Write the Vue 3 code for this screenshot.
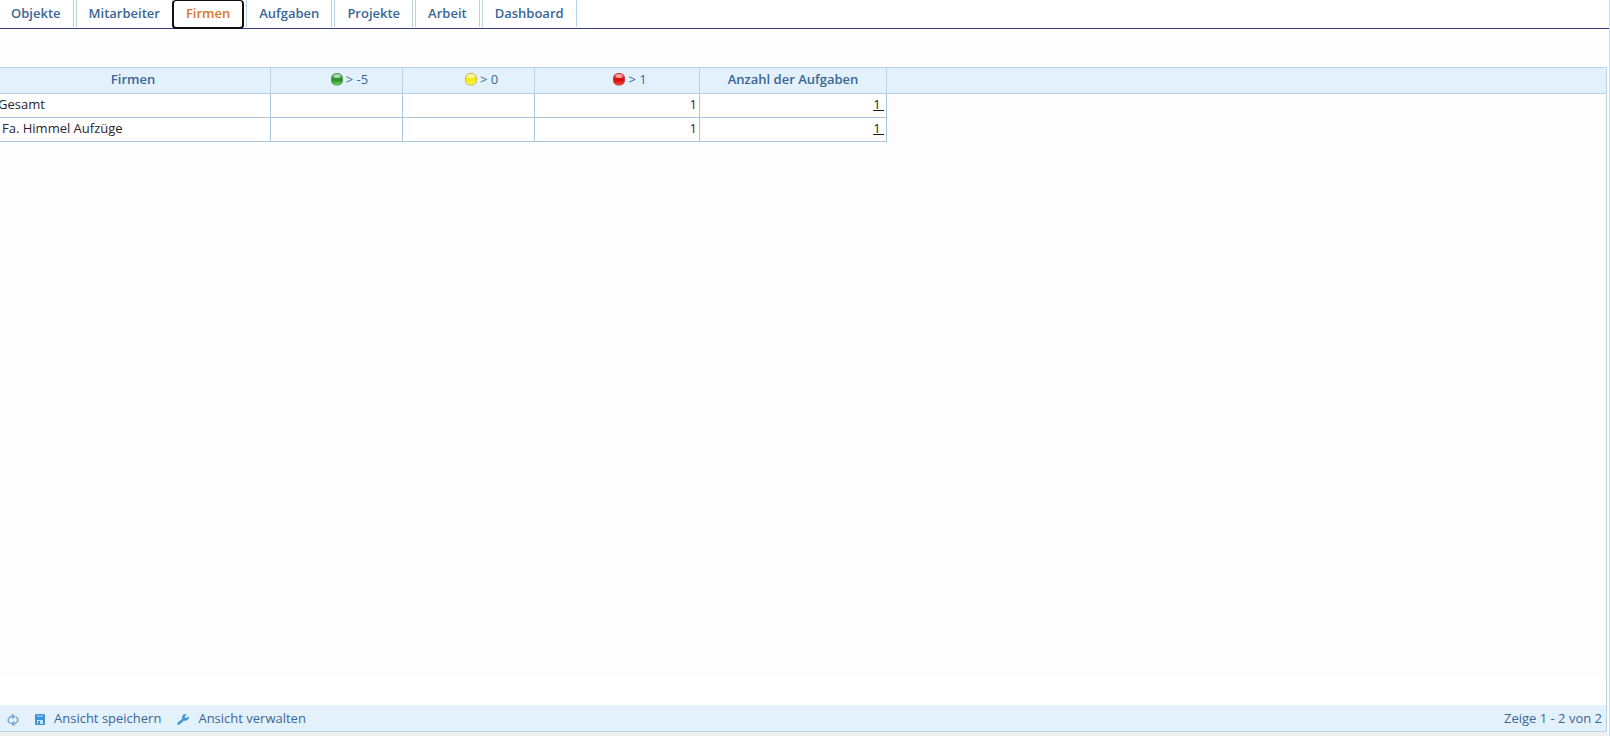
<script setup>
import { ref } from 'vue'

const tabs = ['Objekte', 'Mitarbeiter', 'Firmen', 'Aufgaben', 'Projekte', 'Arbeit', 'Dashboard']
const active = ref('Firmen')
const rows = [
  { name: 'Gesamt', total: true, late: 1, count: 1 },
  { name: 'Fa. Himmel Aufzüge', total: false, late: 1, count: 1 },
]
const lights = [
  { id: 'green', label: '> -5', edge: '#4f9a50', top: '#a5dca0', mid: '#2c9230', low: '#6be052' },
  { id: 'yellow', label: '> 0', edge: '#d0b45a', top: '#fffbb0', mid: '#f8ea10', low: '#fffa5a' },
  { id: 'red', label: '> 1', edge: '#c03c3c', top: '#ffb0ac', mid: '#d80c0c', low: '#ff4a3c' },
]
</script>

<template>
  <div class="page">
    <nav class="tabs">
      <button
        v-for="tab in tabs"
        :key="tab"
        type="button"
        class="tab"
        :class="{ active: tab === active }"
        @click="active = tab"
      >{{ tab }}</button>
    </nav>

    <main class="panel">
      <div class="grid">
        <table>
          <colgroup>
            <col class="c-name"><col class="c-light"><col class="c-light"><col class="c-late"><col class="c-count"><col>
          </colgroup>
          <thead>
            <tr>
              <th class="first">Firmen</th>
              <th v-for="l in lights" :key="l.id" class="light">
                <span class="light-label">
                  <svg width="12" height="13" viewBox="0 0 12 13" aria-hidden="true">
                    <defs>
                      <linearGradient :id="l.id" x1="0" y1="0" x2="0" y2="1">
                        <stop offset="0" :stop-color="l.top" />
                        <stop offset="0.45" :stop-color="l.mid" />
                        <stop offset="0.6" :stop-color="l.mid" />
                        <stop offset="1" :stop-color="l.low" />
                      </linearGradient>
                    </defs>
                    <rect x="0.5" y="0.5" width="11" height="11.5" rx="4.5" :fill="`url(#${l.id})`" :stroke="l.edge" />
                    <rect x="3" y="2" width="6" height="3" rx="1.5" fill="#fff" fill-opacity="0.5" />
                  </svg>
                  {{ l.label }}
                </span>
              </th>
              <th>Anzahl der Aufgaben</th>
              <td class="rest"></td>
            </tr>
          </thead>
          <tbody>
            <tr v-for="row in rows" :key="row.name">
              <td class="name" :class="{ total: row.total }">{{ row.name }}</td>
              <td></td>
              <td></td>
              <td class="num">{{ row.late }}</td>
              <td class="num"><a href="#">{{ row.count }}&nbsp;</a></td>
            </tr>
          </tbody>
        </table>
      </div>

      <footer class="bar">
        <button type="button" class="tool refresh" aria-label="Aktualisieren">
          <svg width="12" height="12" viewBox="0 0 12 12" fill="none" stroke="#6ba4d2" stroke-width="1.3" aria-hidden="true">
            <path d="M3.6 9.6L1.2 7.2V5L3.8 2.4H6.6" />
            <path d="M5 0.2L7.4 2.4L5 4.6" />
            <path d="M8.8 2.8L10.8 5V7L8.2 9.6H5.6" />
            <path d="M7.2 7.4L4.8 9.6L7.2 11.8" />
          </svg>
        </button>
        <button type="button" class="tool">
          <svg width="10" height="11" viewBox="0 0 10 11" aria-hidden="true">
            <rect width="10" height="11" rx="1" fill="#3f93d8" />
            <rect x="2" y="1" width="6" height="2" fill="#79b9ea" />
            <rect x="2" y="6" width="6" height="4" fill="#c4e2f8" />
            <rect x="3" y="7" width="2" height="3" fill="#3f93d8" />
          </svg>
          <span>Ansicht speichern</span>
        </button>
        <button type="button" class="tool">
          <svg width="12" height="11" viewBox="0 0 12 11" aria-hidden="true">
            <path d="M1.6 9.6L7 5" stroke="#4797d8" stroke-width="2.6" stroke-linecap="round" />
            <path d="M9.6 0.4A3.2 3.2 0 0 0 5.2 4.2L7.2 6.4A3.3 3.3 0 0 0 11.6 2.2L9.6 4L7.8 3.4L7.8 2.2Z" fill="#4797d8" />
          </svg>
          <span>Ansicht verwalten</span>
        </button>
        <span class="status">Zeige 1 - 2 von 2</span>
      </footer>
    </main>
  </div>
</template>

<style>
body {
  margin: 0;
  background: #f0f0f0;
}
</style>

<style scoped>
.page {
  box-sizing: border-box;
  display: flex;
  flex-direction: column;
  height: 100vh;
  padding-bottom: 4px;
  border-right: 1px solid #c4dcea;
  font: 13px/16px "Open Sans", "Noto Sans", sans-serif;
  color: #3a6796;
}
.tabs {
  display: flex;
  gap: 2px;
  height: 28px;
  background: #fff;
  border-bottom: 1px solid #3c3f7c;
}
.tab {
  box-sizing: border-box;
  height: 27px;
  padding: 0 12px 2px;
  border: 0 solid #b9d3e6;
  border-width: 0 1px;
  background: #fff;
  font: 600 13px/16px "Open Sans", "Noto Sans", sans-serif;
  color: #3a6796;
}
.tab:first-child {
  padding-left: 11px;
  border-left: 0;
}
.tab.active {
  height: 29px;
  margin-left: -3px;
  border: 2px solid #101010;
  border-top-width: 1px;
  border-radius: 4px;
  color: #d8782a;
}
.panel {
  flex: 1;
  display: flex;
  flex-direction: column;
  padding: 38px 2px 0 0;
  background: linear-gradient(#fdfdfd calc(100% - 60px), #fff calc(100% - 48px));
}
.grid {
  flex: 1;
  border-top: 1px solid #b9d3e6;
  border-right: 1px solid #b9d3e6;
}
table {
  width: 100%;
  table-layout: fixed;
  border-collapse: separate;
  border-spacing: 0;
}
.c-name { width: 271px; }
.c-light { width: 132px; }
.c-late { width: 165px; }
.c-count { width: 187px; }
th,
td {
  box-sizing: border-box;
  padding: 0 2px 4px;
  border: 0 solid #a9c5db;
  border-width: 0 1px 1px 0;
  white-space: nowrap;
}
th,
.rest {
  height: 26px;
  border-color: #b9d3e6;
  background: #e3f1fd;
  font-weight: 600;
}
.rest { border-right: 0; }
.first { padding-right: 6px; }
.light {
  padding-left: 28px;
  font-weight: 400;
}
.light-label {
  display: inline-flex;
  align-items: center;
  gap: 3px;
  vertical-align: middle;
}
tbody td {
  height: 24px;
  background: #fff;
  color: #2a2530;
}
.name.total {
  padding-left: 0;
  text-indent: -2px;
}
.num { text-align: right; }
.num a { color: #1c1c28; }
.bar {
  display: flex;
  align-items: center;
  gap: 16px;
  height: 26px;
  padding: 0 4px 0 7px;
  border-right: 1px solid #b9d3e6;
  border-bottom: 1px solid #b9d3e6;
  background: #e3f1fd;
}
.tool {
  display: flex;
  align-items: center;
  gap: 9px;
  padding: 0;
  border: 0;
  background: none;
  font: inherit;
  color: inherit;
}
.tool svg { margin-top: 3px; }
.status { margin-left: auto; }
</style>
